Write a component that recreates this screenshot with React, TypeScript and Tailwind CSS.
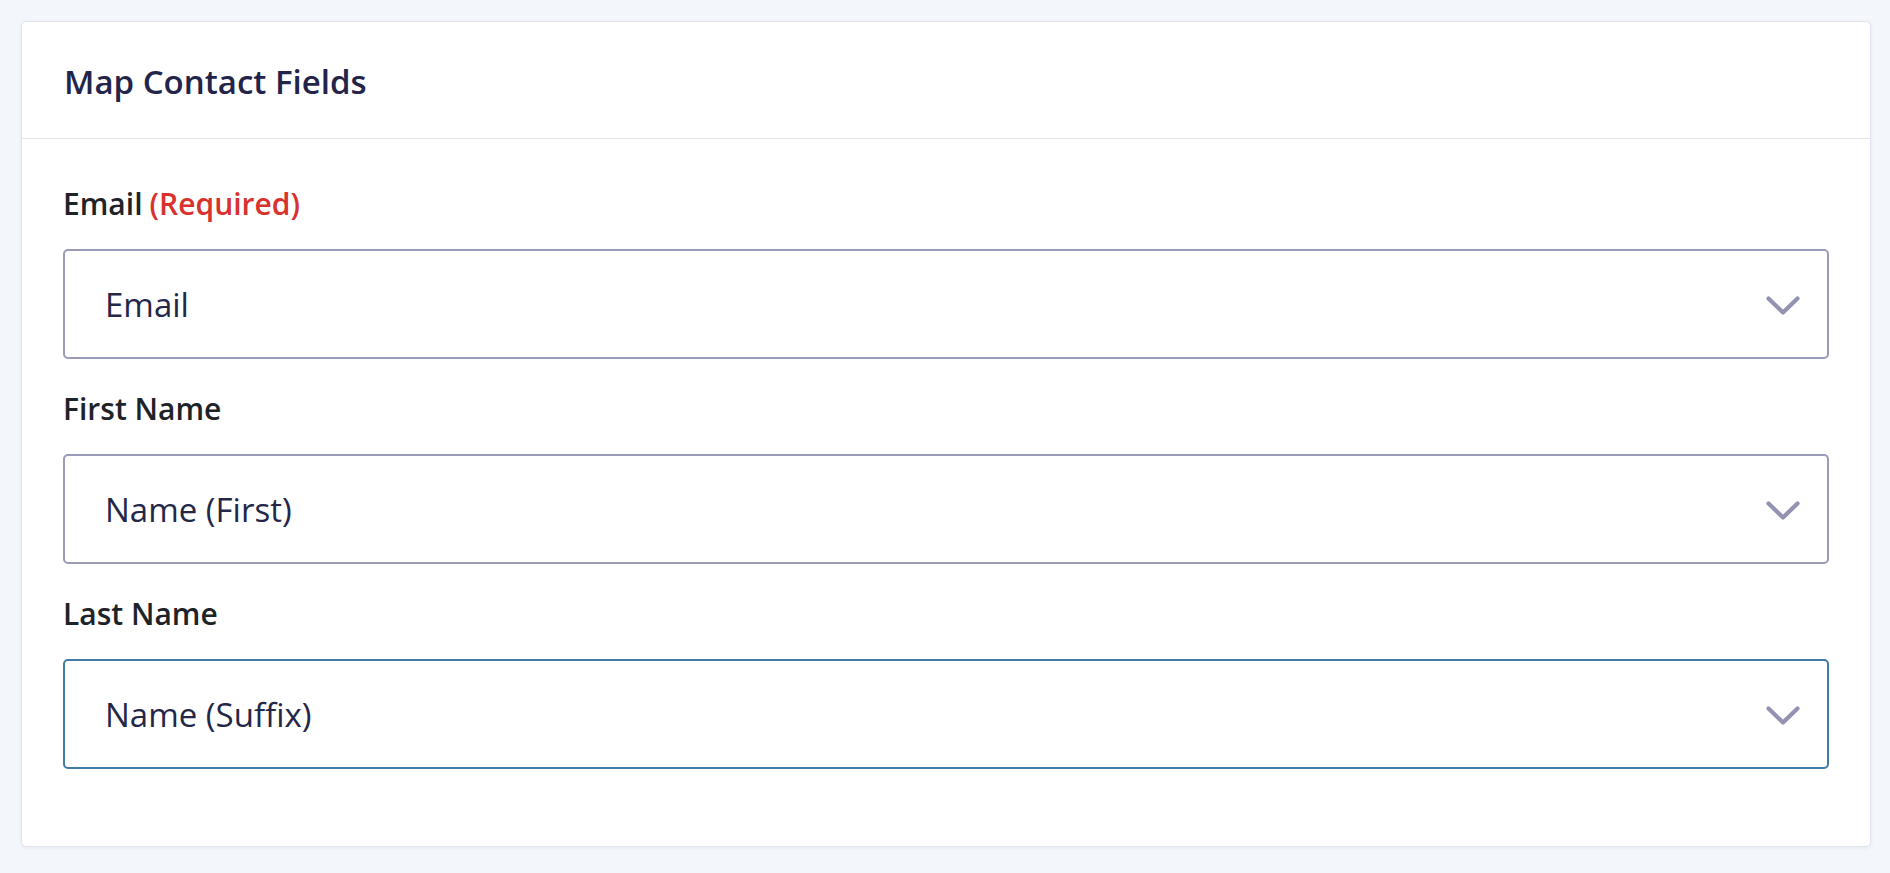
import { ReactNode } from 'react'

type Field = {
  label: string
  value: string
  required?: boolean
  focused?: boolean
}

const fields: Field[] = [
  { label: 'Email', value: 'Email', required: true },
  { label: 'First Name', value: 'Name (First)' },
  { label: 'Last Name', value: 'Name (Suffix)', focused: true },
]

function Chevron() {
  return (
    <svg width="34" height="20" viewBox="0 0 34 20" fill="none" className="mt-[3px] shrink-0">
      <polyline
        points="2.5,2.5 17,16.5 31.5,2.5"
        stroke="#9392b3"
        strokeWidth="4.2"
        strokeLinecap="round"
        strokeLinejoin="round"
      />
    </svg>
  )
}

function FakeSelect({ value, focused }: { value: string; focused?: boolean }) {
  return (
    <div
      className={
        focused
          ? 'flex h-[110px] items-center justify-between rounded-[5px] border-2 border-[#3f7ba6] bg-white pl-[40px] pr-[27px]'
          : 'flex h-[110px] items-center justify-between rounded-[5px] border-2 border-[#9a9bb9] bg-white pl-[40px] pr-[27px]'
      }
    >
      <span className="text-[33px] leading-none text-[#242748]">{value}</span>
      <Chevron />
    </div>
  )
}

function FieldRow({ field, children }: { field: Field; children: ReactNode }) {
  return (
    <div>
      <label className="block h-[40px] text-[30px] font-semibold leading-[40px] text-[#1d2327]">
        {field.label}
        {field.required && <span className="ml-[7px] text-[#d8312e]">(Required)</span>}
      </label>
      <div className="mt-[25px]">{children}</div>
    </div>
  )
}

export default function App() {
  return (
    <div
      className="min-h-screen bg-[#f3f6fa] pl-[21px] pr-[19px] pt-[21px] pb-[27px]"
      style={{ fontFamily: '"Open Sans", "Noto Sans", sans-serif' }}
    >
      <div className="rounded-[5px] border border-[#e1e3ee] bg-white shadow-[0_1px_4px_rgba(30,40,90,0.06)]">
        <div className="flex h-[117px] items-center border-b border-[#e4e6ee] px-[42px] pt-[3px]">
          <h2 className="text-[33px] font-semibold text-[#23244a]">Map Contact Fields</h2>
        </div>
        <div className="flex flex-col gap-[30px] px-[41px] pt-[45px] pb-[77px]">
          {fields.map((f) => (
            <FieldRow key={f.label} field={f}>
              <FakeSelect value={f.value} focused={f.focused} />
            </FieldRow>
          ))}
        </div>
      </div>
    </div>
  )
}
